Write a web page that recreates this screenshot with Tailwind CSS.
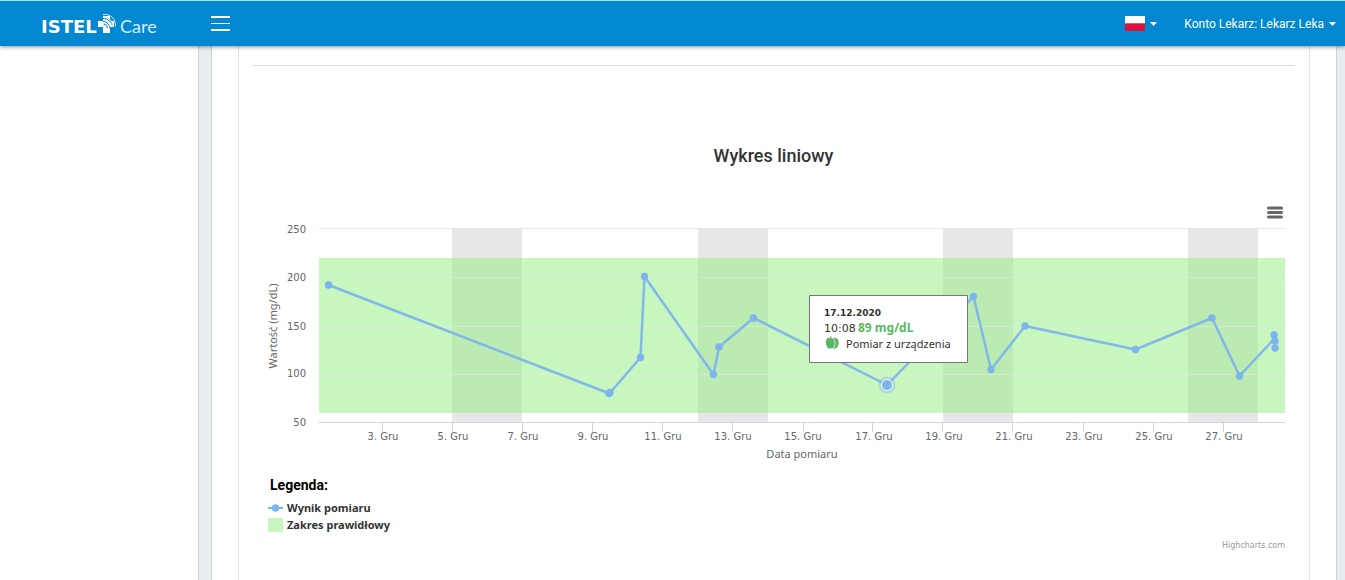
<!DOCTYPE html>
<html lang="pl">
<head>
<meta charset="utf-8">
<title>ISTEL Care</title>
<script src="https://cdn.jsdelivr.net/npm/@tailwindcss/browser@4"></script>
</head>
<body class="flex min-h-screen flex-col bg-[#e9edf0] font-[Roboto,sans-serif]">
<header class="relative z-10 flex h-[46px] shrink-0 items-center border-t border-[#a5e9f7] bg-[#0288d1] text-white shadow-[0_1px_4px_rgba(0,0,0,0.45)]">
  <a href="#" aria-label="ISTEL Care" class="ml-[41px] flex w-[170px] items-center">
    <svg width="118" height="26" viewBox="0 0 118 26" fill="#fff">
      <text x="0" y="22" font-family="DejaVu Sans" font-weight="700" font-size="18">ISTEL</text>
      <path d="M57 10h5v-5h7v5h4v6h-4v6h-7v-6h-5z"/>
      <g fill="none" stroke="#0288d1" stroke-width="1"><path d="M62.500 13a4 4 0 0 1 4 4M62 10.500a7 7 0 0 1 7 7M62 7.500a10 10 0 0 1 10 9"/></g>
      <g fill="none" stroke="#cdeafa" stroke-width="1"><path d="M62 3.500c7-1 13 4 12.500 12M62 6c6 0 10 4 9.500 10M62 9c4 0 7 3 7 7"/></g>
      <text x="79" y="22" font-family="Lato" font-size="18" fill="#d6effb">Care</text>
    </svg>
  </a>
  <button type="button" aria-label="Menu" class="flex w-[19px] flex-col gap-[5px]">
    <span class="h-[2px] w-full bg-white"></span><span class="h-px w-full bg-white"></span><span class="h-[2px] w-full bg-white"></span>
  </button>
  <div class="ml-auto flex items-center pr-[9px]">
    <button type="button" aria-label="Polski" class="mr-[27px] flex items-center gap-[5px]">
      <svg width="20" height="15" viewBox="0 0 20 15"><path fill="#fff" d="M0 0h20v7.500H0z"/><path fill="#dc143c" d="M0 7.500h20V15H0z"/></svg>
      <svg width="7" height="4" viewBox="0 0 7 4" fill="#fff"><path d="M0 0h7L3.500 4z"/></svg>
    </button>
    <button type="button" class="flex items-center gap-[5px] text-[12px] leading-[20px] font-normal">Konto Lekarz: Lekarz Leka
      <svg width="7" height="4" viewBox="0 0 7 4" fill="#fff"><path d="M0 0h7L3.500 4z"/></svg>
    </button>
  </div>
</header>
<div class="flex flex-1">
  <aside class="w-[199px] shrink-0 border-r border-[#d0d4d6] bg-white"></aside>
  <main class="mr-[8px] ml-[12px] flex flex-1 border-x border-[#d0d4d6] bg-white px-[26px]">
    <section class="flex-1 border-x border-[#e4e4e4] pt-[19px] pr-[14px] pl-[13px]">
      <hr class="border-[#dcdcdc]">
      <h2 class="mt-[78px] text-center text-[18px] leading-[24px] font-medium text-[#333]">Wykres liniowy</h2>
      <div class="mt-[36px] mr-[12px] flex justify-end">
        <button type="button" aria-label="Menu wykresu" class="flex h-[16px] w-[16px] items-center">
          <svg width="16" height="13" viewBox="0 0 16 13" stroke="#666" stroke-width="3" stroke-linecap="round"><path d="M1.500 2h13M1.500 6.500h13M1.500 11h13"/></svg>
        </button>
      </div>
      <svg class="block w-full" viewBox="0 0 1043 246" font-family="DejaVu Sans, sans-serif" role="img" aria-label="Wykres liniowy">
        <g transform="translate(67 9)">
          <path fill="#e7e7e7" d="M133-1h70v194h-70zM379-1h70v194h-70zM624-1h70v194h-70zM869-1h70v194h-70z"/>
          <path fill="#90ed7d" fill-opacity=".5" d="M0 29h966v155H0z"/>
          <path stroke="#e6e6e6" d="M0-.5h966"/>
          <path stroke="#e6e6e6" stroke-opacity=".6" d="M0 48.500h966M0 97.500h966M0 145.500h966"/>
          <path stroke="#ccd6eb" d="M0 193.500h966M63.500 194v9M133.500 194v9M203.500 194v9M273.500 194v9M343.500 194v9M413.500 194v9M484.500 194v9M553.500 194v9M623.500 194v9M693.500 194v9M764.500 194v9M834.500 194v9M904.500 194v9"/>
          <path fill="none" stroke="#7cb5ec" stroke-width="2.500" stroke-linejoin="round" stroke-opacity=".95" d="M9.500 56L290.500 164.500L321.500 128.500L325.500 47.500L394.500 145.500L400 118L434.500 89L568 156L654.500 67.500L672 140.500L706 97L816.500 120.500L893 89L920.500 147L956 109L955 106L956 119"/>
          <g fill="#7cb5ec"><circle cx="9.500" cy="56" r="3.700"/><circle cx="290" cy="164.500" r="3.700"/><circle cx="291" cy="163.500" r="3.700"/><circle cx="321.500" cy="128.500" r="3.700"/><circle cx="325.500" cy="47.500" r="3.700"/><circle cx="394.500" cy="145.500" r="3.700"/><circle cx="400" cy="118" r="3.700"/><circle cx="434.500" cy="89" r="3.700"/><circle cx="654.500" cy="67.500" r="3.700"/><circle cx="672" cy="140.500" r="3.700"/><circle cx="706" cy="97" r="3.700"/><circle cx="816.500" cy="120.500" r="3.700"/><circle cx="893" cy="89" r="3.700"/><circle cx="920.500" cy="147" r="3.700"/><circle cx="955" cy="106" r="3.700"/><circle cx="956" cy="112" r="3.700"/><circle cx="956" cy="119" r="3.700"/></g>
          <circle cx="568" cy="156" r="8.500" fill="#7cb5ec" fill-opacity=".4"/>
          <circle cx="568" cy="156" r="5.500" fill="#7cb5ec" stroke="#fff"/>
          <g font-size="10" fill="#666" text-anchor="end"><text x="-13" y="4">250</text><text x="-13" y="52">200</text><text x="-13" y="101">150</text><text x="-13" y="148">100</text><text x="-13" y="197">50</text></g>
          <g font-size="10" fill="#666" text-anchor="middle"><text x="64" y="211">3. Gru</text><text x="134" y="211">5. Gru</text><text x="204" y="211">7. Gru</text><text x="274" y="211">9. Gru</text><text x="344" y="211">11. Gru</text><text x="414" y="211">13. Gru</text><text x="484" y="211">15. Gru</text><text x="555" y="211">17. Gru</text><text x="625" y="211">19. Gru</text><text x="695" y="211">21. Gru</text><text x="765" y="211">23. Gru</text><text x="835" y="211">25. Gru</text><text x="905" y="211">27. Gru</text></g>
          <g font-family="Noto Sans, sans-serif" font-size="11" fill="#666" text-anchor="middle"><text x="483" y="229">Data pomiaru</text><text transform="translate(-42 97) rotate(-90)">Wartość (mg/dL)</text></g>
          <path fill="#fff" stroke="#767676" d="M490.500 66.500h158v67h-158z"/>
          <text x="505" y="87" font-size="9" font-weight="700" fill="#333">17.12.2020</text>
          <text x="505" y="103" font-size="11" fill="#333">10:08</text>
          <text x="539" y="103" font-family="Noto Sans, sans-serif" font-size="12" font-weight="700" fill="#5cb860">89 mg/dL</text>
          <path fill="#5cb567" d="M513 110c-4-3-7 0-6 5 1 4 3 6 6 4 3 2 6 0 6.500-4 1-5-3-8-6.500-5z"/>
          <path fill="none" stroke="#fff" stroke-width=".7" d="M514.500 109c2 3 2 7 0 11"/>
          <path fill="none" stroke="#5cb567" d="M513 110q-.5-2-2-3"/>
          <text x="527" y="119" font-family="Noto Sans, sans-serif" font-size="11" fill="#333">Pomiar z urządzenia</text>
        </g>
      </svg>
      <h3 class="mt-[9px] ml-[18px] text-[14px] leading-[20px] font-bold text-black">Legenda:</h3>
      <ul class="mt-[4px] ml-[16px] font-['Noto_Sans',sans-serif] text-[11px] leading-[17px] font-bold text-[#333]">
        <li class="flex items-center gap-[4px]"><svg width="15" height="14" viewBox="0 0 15 14"><path stroke="#7cb5ec" stroke-width="2" d="M0 7h15"/><circle cx="7.500" cy="7" r="3.700" fill="#7cb5ec"/></svg>Wynik pomiaru</li>
        <li class="flex items-center gap-[4px]"><svg width="15" height="14" viewBox="0 0 15 14"><path fill="#c7f6be" d="M0 0h15v14H0z"/></svg>Zakres prawidłowy</li>
      </ul>
      <div class="mt-[7px] mr-[10px] text-right font-['DejaVu_Sans',sans-serif] text-[8px] leading-[12px] text-[#999]"><a href="#">Highcharts.com</a></div>
    </section>
  </main>
</div>
</body>
</html>
